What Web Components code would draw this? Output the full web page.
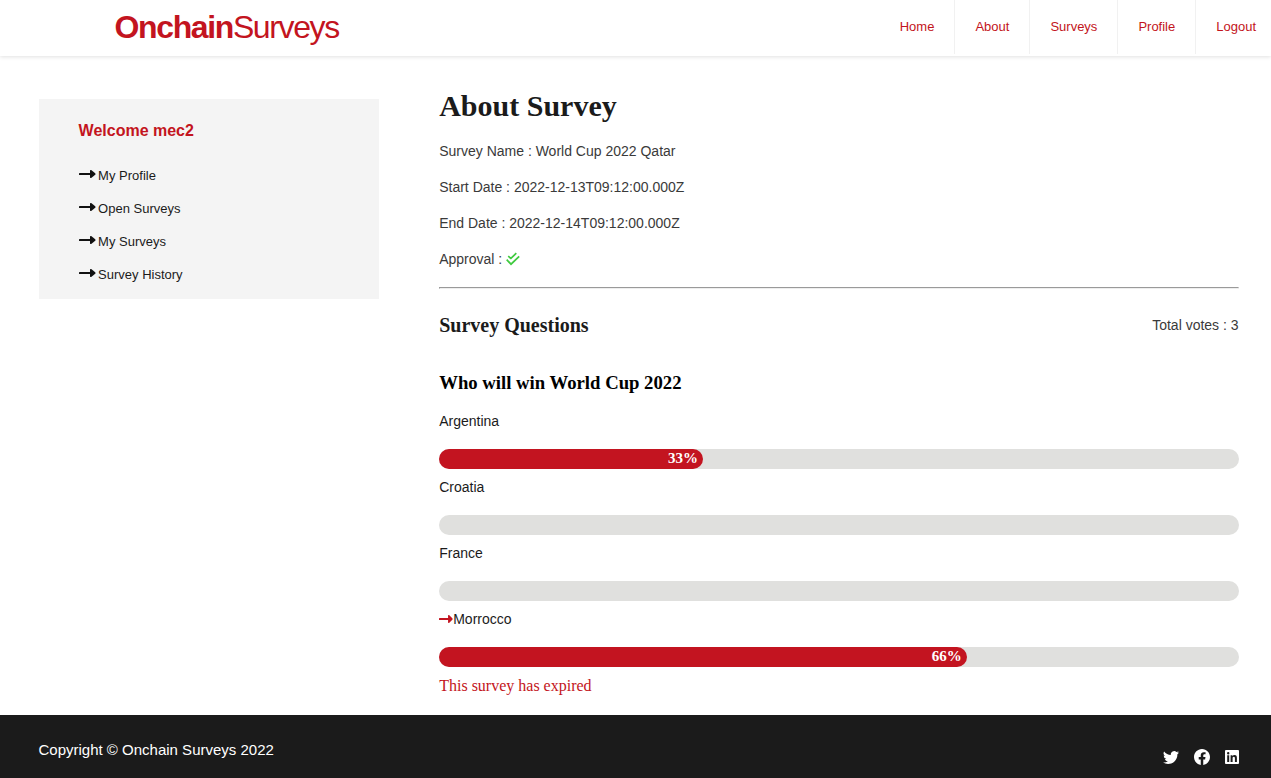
<!DOCTYPE html>
<html lang="en">
<head>
<meta charset="utf-8">
<title>Onchain Surveys</title>
<style>
html, body { margin: 0; height: 100%; background: #fff; overflow: hidden; }
body { font-family: "Liberation Sans", Arial, sans-serif; color: #1b1b1b; }
</style>
</head>
<body>
<survey-app></survey-app>
<script>
const define = (name, html) => {
  const template = document.createElement('template');
  template.innerHTML = html;
  customElements.define(name, class extends HTMLElement {
    constructor() {
      super();
      this.attachShadow({ mode: 'open' }).appendChild(template.content.cloneNode(true));
    }
  });
};

define('arrow-icon', `
<style>:host{display:inline-block;width:17px;height:10px}svg{display:block;width:100%;height:100%}</style>
<svg viewBox="0 0 17 10" preserveAspectRatio="none" fill="currentColor"><rect x="0" y="4" width="13" height="2" rx=".6"/><path d="M11 1.7Q11 .5 12.2 1.1L16.2 4.2Q17 5 16.2 5.8L12.2 8.9Q11 9.5 11 8.3Z"/></svg>`);

define('nav-link', `
<style>:host{display:block;padding:0 20px;font-size:13px;line-height:54px;height:54px;color:#c31420;border-right:1px solid #f1f1f1}
:host(:last-child){padding-right:15px;border-right:0}</style><slot></slot>`);

define('site-header', `
<style>
:host{display:flex;justify-content:space-between;height:56px;box-sizing:border-box;background:#fff;box-shadow:0 1px 4px rgba(0,0,0,.12)}
.logo{padding-left:114.6px;font-size:32px;line-height:54px;letter-spacing:-1.39px;color:#c31420}
nav{display:flex}
</style>
<div class="logo"><b>Onchain</b>Surveys</div>
<nav><nav-link>Home</nav-link><nav-link>About</nav-link><nav-link>Surveys</nav-link><nav-link>Profile</nav-link><nav-link>Logout</nav-link></nav>`);

define('side-item', `
<style>:host{display:flex;height:33px;font-size:13px;line-height:33px;color:#1b1b1b}
arrow-icon{margin:10px 2.5px 0 0;color:#111}</style><arrow-icon></arrow-icon><span><slot></slot></span>`);

define('side-panel', `
<style>:host{display:block;box-sizing:border-box;width:340px;height:200px;background:#f4f4f4;padding:20px 39px 0 39.6px}
h2{margin:0 0 16px;font-size:16px;line-height:24px;color:#c31420}</style>
<h2>Welcome mec2</h2>
<side-item>My Profile</side-item><side-item>Open Surveys</side-item><side-item>My Surveys</side-item><side-item>Survey History</side-item>`);

define('detail-line', `
<style>:host{display:flex;align-items:center;height:36px;font-size:14px;line-height:36px;color:#3a3a3a}</style><slot></slot>`);

define('check-icon', `
<style>:host{display:block;width:14px;height:14px;margin-left:4px}svg{display:block}</style>
<svg width="14" height="14" viewBox="0 0 14 14" fill="none" stroke="#3fca3f" stroke-width="1.7"><path d="M2.2 4.2L4.9 6.4L10.3 1.2M.7 7.7L5 12.2L13.2 4.3"/></svg>`);

customElements.define('vote-option', class extends HTMLElement {
  connectedCallback() {
    const value = Number(this.getAttribute('value'));
    this.attachShadow({ mode: 'open' }).innerHTML = `
<style>
:host{display:block;height:66px}
.name{display:flex;align-items:center;font-size:14px;line-height:20px;height:20px;color:#1b1b1b}
arrow-icon{width:14px;height:10px;color:#c31420}
.track{margin-top:18px;height:20px;border-radius:10px;background:#e0e0de}
.fill{box-sizing:border-box;height:20px;border-radius:10px;background:#c31420;padding-right:5px;text-align:right;color:#fff;font:bold 15px/19px "Liberation Serif",serif}
</style>
<div class="name">${this.hasAttribute('chosen') ? '<arrow-icon></arrow-icon>' : ''}<slot></slot></div>
<div class="track">${value ? `<div class="fill" style="width:${value}%">${value}%</div>` : ''}</div>`;
  }
});

define('survey-report', `
<style>
:host{display:block;width:799.4px}
h1,h2,h3{font-family:"Liberation Serif",serif;margin:0}
h1{font-size:30px;line-height:36px;margin-bottom:9px;color:#1b1b1b}
hr{margin:10px 0 0}
.bar{display:flex;justify-content:space-between;align-items:center;height:24px;margin-top:24px}
.bar h2{font-size:20px;line-height:24px;color:#1b1b1b}
.bar span{font-size:14px;color:#3a3a3a}
h3{font-size:18.72px;line-height:22px;margin:35px 0 17px;color:#000}
.expired{font:16px/18px "Liberation Serif",serif;color:#c31420;margin-top:2px}
</style>
<h1>About Survey</h1>
<detail-line>Survey Name : World Cup 2022 Qatar</detail-line>
<detail-line>Start Date : 2022-12-13T09:12:00.000Z</detail-line>
<detail-line>End Date : 2022-12-14T09:12:00.000Z</detail-line>
<detail-line>Approval :<check-icon></check-icon></detail-line>
<hr>
<div class="bar"><h2>Survey Questions</h2><span>Total votes : 3</span></div>
<h3>Who will win World Cup 2022</h3>
<vote-option value="33">Argentina</vote-option>
<vote-option value="0">Croatia</vote-option>
<vote-option value="0">France</vote-option>
<vote-option value="66" chosen>Morrocco</vote-option>
<div class="expired">This survey has expired</div>`);

define('site-footer', `
<style>
:host{display:flex;justify-content:space-between;box-sizing:border-box;height:63px;background:#1b1b1b;color:#fff;padding:0 31px 0 38.5px}
p{margin:0;font-size:15px;line-height:70px}
.social{display:flex;gap:14px;padding-top:34px}
svg{display:block;width:16px;height:16px}
svg:first-child{margin-right:1px}
</style>
<p>Copyright © Onchain Surveys 2022</p>
<div class="social">
<svg viewBox="0 0 16 16" fill="currentColor"><path d="M5.026 15c6.038 0 9.341-5.003 9.341-9.334 0-.14 0-.282-.006-.422A6.685 6.685 0 0 0 16 3.542a6.658 6.658 0 0 1-1.889.518 3.301 3.301 0 0 0 1.447-1.817 6.533 6.533 0 0 1-2.087.793A3.286 3.286 0 0 0 7.875 6.03a9.325 9.325 0 0 1-6.767-3.429 3.289 3.289 0 0 0 1.018 4.382A3.323 3.323 0 0 1 .64 6.575v.045a3.288 3.288 0 0 0 2.632 3.218 3.203 3.203 0 0 1-.865.115 3.23 3.23 0 0 1-.614-.057 3.283 3.283 0 0 0 3.067 2.277A6.588 6.588 0 0 1 .78 13.58a6.32 6.32 0 0 1-.78-.045A9.344 9.344 0 0 0 5.026 15z"/></svg>
<svg viewBox="0 0 16 16" fill="currentColor"><path d="M16 8.049c0-4.446-3.582-8.05-8-8.05C3.58 0-.002 3.603-.002 8.05c0 4.017 2.926 7.347 6.75 7.951v-5.625h-2.03V8.05H6.75V6.275c0-2.017 1.195-3.131 3.022-3.131.876 0 1.791.157 1.791.157v1.98h-1.009c-.993 0-1.303.621-1.303 1.258v1.51h2.218l-.354 2.326H9.25V16c3.824-.604 6.75-3.934 6.75-7.951z"/></svg>
<svg viewBox="0 0 16 16"><rect x="1" y="1" width="14" height="14" rx=".9" fill="currentColor"/><path d="M3.2 6.3h2v6.6h-2zM4.2 3.1a1.2 1.2 0 1 1 0 2.4a1.2 1.2 0 0 1 0-2.4zM6.6 6.3h1.9v.9c.4-.7 1.1-1.1 2-1.1 1.9 0 2.4 1.3 2.4 3v3.8h-2V9.6c0-.9-.1-1.8-1.1-1.8s-1.2.8-1.2 1.7v3.4h-2z" fill="#1b1b1b"/></svg>
</div>`);

define('survey-app', `
<style>
:host{display:flex;flex-direction:column;height:778px}
main{display:flex;flex:1;gap:60.2px;padding-left:39px}
side-panel{margin-top:43px}
survey-report{margin-top:32px}
</style>
<site-header></site-header>
<main><side-panel></side-panel><survey-report></survey-report></main>
<site-footer></site-footer>`);
</script>
</body>
</html>
